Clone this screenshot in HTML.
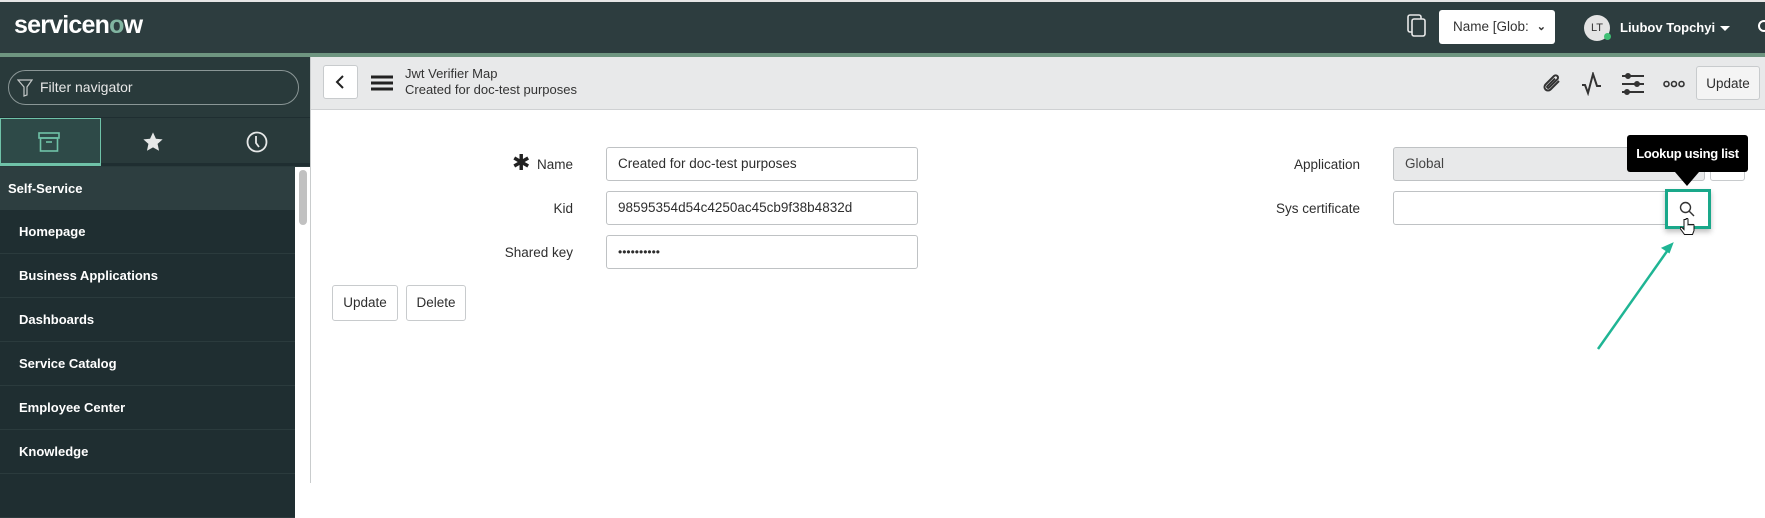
<!DOCTYPE html>
<html><head><meta charset="utf-8"><style>
*{box-sizing:border-box;margin:0;padding:0}
body{width:1765px;height:483px;overflow:hidden;font-family:"Liberation Sans",sans-serif;background:#fff;position:relative;color:#2e2e2e}
.abs{position:absolute}
#top{left:0;top:0;width:1765px;height:53px;background:#2d3d3f;border-top:2px solid #e6e6e6}
#strip{left:0;top:53px;width:1765px;height:4px;background:#6e9580}
#side{left:0;top:57px;width:310px;height:426px;background:#293a3b}
.item{position:absolute;left:0;width:295px;height:44px;background:#1f2e31;border-bottom:1px solid #2b3b3d;color:#fff;font-size:13px;font-weight:bold;padding-left:19px;line-height:44px}
#hdr{left:311px;top:57px;width:1454px;height:53px;background:#e8e9ea;border-bottom:1px solid #cfd1d3}
.lbl{position:absolute;font-size:13.5px;color:#2e2e2e;text-align:right}
.inp{position:absolute;border:1px solid #bfc2c4;border-radius:3px;background:#fff;font-size:13.5px;padding-left:11px;line-height:32px;color:#2e2e2e}
.btn{position:absolute;border:1px solid #c8cbcd;border-radius:3px;background:#fff;font-size:13.5px;text-align:center;line-height:33px}
</style></head><body>
<div id="top" class="abs"></div>
<div class="abs" style="left:14px;top:11px;color:#fff;font-size:25px;font-weight:bold;letter-spacing:-0.8px">servicen<span style="color:#81b5a1">o</span>w</div>
<svg class="abs" style="left:1406px;top:14px" width="22" height="24" viewBox="0 0 22 24" fill="none" stroke="#e8e8e8" stroke-width="1.6"><rect x="2" y="1" width="13" height="17" rx="2"/><rect x="6" y="5" width="13" height="17" rx="2" fill="#2d3d3f"/></svg>
<div class="abs" style="left:1439px;top:10px;width:116px;height:34px;background:#fff;border-radius:3px;font-size:13.5px;line-height:34px;padding-left:14px;color:#333">Name [Glob:<span style="position:absolute;right:9px;font-size:11px;font-weight:bold">&#8964;</span></div>
<div class="abs" style="left:1584px;top:15px;width:26px;height:26px;border-radius:50%;background:#e4e4e4;color:#333;font-size:11px;text-align:center;line-height:26px">LT</div>
<div class="abs" style="left:1604px;top:33px;width:7px;height:7px;border-radius:50%;background:#3fbf74"></div>
<div class="abs" style="left:1620px;top:20px;color:#fff;font-size:13px;font-weight:bold">Liubov Topchyi</div>
<div class="abs" style="left:1720px;top:26px;width:0;height:0;border-left:5px solid transparent;border-right:5px solid transparent;border-top:5px solid #fff"></div>
<div class="abs" style="left:1758px;top:20px;width:12px;height:12px;border:2px solid #fff;border-radius:50%"></div>
<div id="strip" class="abs"></div>
<div id="side" class="abs"></div>
<div class="abs" style="left:8px;top:70px;width:291px;height:35px;border:1px solid #8a9696;border-radius:18px"></div>
<svg class="abs" style="left:17px;top:78px" width="16" height="20" viewBox="0 0 16 20" fill="none" stroke="#c4c8c8" stroke-width="1.2"><path d="M1 2h14l-5 7v8l-3 1v-9z"/></svg>
<div class="abs" style="left:40px;top:79px;color:#e8e8e8;font-size:14px">Filter navigator</div>
<div class="abs" style="left:0;top:117px;width:310px;height:1px;background:#1f2e31"></div>
<div class="abs" style="left:0;top:118px;width:101px;height:48px;background:#2e4a48;border:1px solid #6fc2a8;border-bottom:3px solid #6fc2a8"></div>
<div class="abs" style="left:101px;top:163px;width:209px;height:3px;background:#1f2e31"></div>
<svg class="abs" style="left:38px;top:132px" width="22" height="20" viewBox="0 0 22 20" fill="none" stroke="#6fc2a8" stroke-width="1.6"><rect x="1" y="1" width="20" height="5"/><rect x="2.5" y="6" width="17" height="13"/><path d="M8 10h6"/></svg>
<svg class="abs" style="left:142px;top:131px" width="22" height="22" viewBox="0 0 24 24"><path d="M12 1.5l3.2 7 7.3.7-5.5 4.9 1.6 7.4L12 17.8l-6.6 3.7 1.6-7.4L1.5 9.2l7.3-.7z" fill="#e6e8e8"/></svg>
<svg class="abs" style="left:246px;top:131px" width="22" height="22" viewBox="0 0 22 22" fill="none" stroke="#e6e8e8" stroke-width="1.8"><circle cx="11" cy="11" r="9.5"/><path d="M10 5v7l3 4"/></svg>
<div class="abs" style="left:0;top:167px;width:295px;height:43px;background:#2d3e40;color:#fff;font-size:13px;font-weight:bold;line-height:43px;padding-left:8px">Self-Service</div>
<div class="item" style="top:210px">Homepage</div>
<div class="item" style="top:254px">Business Applications</div>
<div class="item" style="top:298px">Dashboards</div>
<div class="item" style="top:342px">Service Catalog</div>
<div class="item" style="top:386px">Employee Center</div>
<div class="item" style="top:430px">Knowledge</div>
<div class="item" style="top:474px"></div>
<div class="abs" style="left:295px;top:167px;width:15px;height:316px;background:#fff"></div>
<div class="abs" style="left:299px;top:170px;width:8px;height:55px;background:#c1c1c1;border-radius:4px"></div>
<div class="abs" style="left:310px;top:57px;width:1px;height:426px;background:#c9cccd"></div>
<div id="hdr" class="abs"></div>
<div class="abs" style="left:323px;top:65px;width:35px;height:34px;background:#fff;border:1px solid #c8cbcd;border-radius:3px"></div>
<svg class="abs" style="left:334px;top:74px" width="12" height="16" viewBox="0 0 12 16" fill="none" stroke="#222" stroke-width="2"><path d="M9 2L3 8l6 6"/></svg>
<svg class="abs" style="left:371px;top:75px" width="22" height="16" viewBox="0 0 22 16" stroke="#222" stroke-width="3"><path d="M0 2h22M0 8h22M0 14h22"/></svg>
<div class="abs" style="left:405px;top:66px;font-size:13px;color:#333">Jwt Verifier Map</div>
<div class="abs" style="left:405px;top:82px;font-size:13px;color:#333">Created for doc-test purposes</div>
<svg class="abs" style="left:1540px;top:72px" width="24" height="24" viewBox="0 0 24 24" fill="none" stroke="#333" stroke-width="2"><path d="M19 9l-8.5 8.5a3.5 3.5 0 01-5-5L14 4a2.3 2.3 0 013.3 3.3L9 15.6a1 1 0 01-1.5-1.5L15 6.6"/></svg>
<svg class="abs" style="left:1581px;top:72px" width="24" height="24" viewBox="0 0 24 24" fill="none" stroke="#333" stroke-width="2"><path d="M1 13h3l3 8 5-19 4 12h4"/></svg>
<svg class="abs" style="left:1622px;top:72px" width="22" height="24" viewBox="0 0 22 24" stroke="#333" stroke-width="2"><path d="M0 4h22M0 12h22M0 20h22"/><circle cx="6" cy="4" r="2" fill="#333"/><circle cx="15" cy="12" r="2" fill="#333"/><circle cx="5" cy="20" r="2" fill="#333"/></svg>
<svg class="abs" style="left:1663px;top:78px" width="22" height="12" viewBox="0 0 22 12" fill="none" stroke="#333" stroke-width="1.6"><circle cx="3.5" cy="6" r="2.5"/><circle cx="11" cy="6" r="2.5"/><circle cx="18.5" cy="6" r="2.5"/></svg>
<div class="btn" style="left:1696px;top:66px;width:64px;height:34px;background:#f4f4f4">Update</div>
<div class="abs" style="left:512px;top:152px;font-size:22px;line-height:22px;color:#222">&#10033;</div>
<div class="lbl" style="left:400px;top:157px;width:173px">Name</div>
<div class="lbl" style="left:400px;top:201px;width:173px">Kid</div>
<div class="lbl" style="left:400px;top:245px;width:173px">Shared key</div>
<div class="inp" style="left:606px;top:147px;width:312px;height:34px">Created for doc-test purposes</div>
<div class="inp" style="left:606px;top:191px;width:312px;height:34px">98595354d54c4250ac45cb9f38b4832d</div>
<div class="inp" style="left:606px;top:235px;width:312px;height:34px;font-size:12px">&#8226;&#8226;&#8226;&#8226;&#8226;&#8226;&#8226;&#8226;&#8226;&#8226;</div>
<div class="btn" style="left:332px;top:285px;width:66px;height:36px">Update</div>
<div class="btn" style="left:406px;top:285px;width:60px;height:36px">Delete</div>
<div class="lbl" style="left:1200px;top:157px;width:160px">Application</div>
<div class="lbl" style="left:1200px;top:201px;width:160px">Sys certificate</div>
<div class="inp" style="left:1393px;top:147px;width:312px;height:34px;background:#e8e9ea;color:#444">Global</div>
<div class="abs" style="left:1710px;top:147px;width:35px;height:34px;border:1px solid #c8cbcd;border-radius:3px;background:#fff"></div>
<div class="inp" style="left:1393px;top:191px;width:312px;height:34px"></div>
<div class="abs" style="left:1665px;top:189px;width:46px;height:40px;border:3px solid #1aa88a;background:#fff;box-shadow:0 3px 5px rgba(0,0,0,.25)"></div>
<svg class="abs" style="left:1679px;top:201px" width="16" height="16" viewBox="0 0 16 16" fill="none" stroke="#333" stroke-width="1.4"><circle cx="6.5" cy="6.5" r="5"/><path d="M10 10l5 5"/></svg>
<svg class="abs" style="left:1680px;top:218px" width="16" height="20" viewBox="0 0 16 20"><path d="M4 1.5v10l-2-2c-1.5-1-2.5.5-1.5 1.5l4 5.5h8l1.5-4v-5c0-1.5-2-1.5-2 0 0-1.5-2-1.5-2 0 0-1.5-2-1.5-2 0V1.5c0-1.5-2.5-1.5-2 0z" fill="#fff" stroke="#111" stroke-width="1"/></svg>
<div class="abs" style="left:1627px;top:135px;width:121px;height:37px;background:#000;border-radius:3px;color:#fff;font-size:13px;font-weight:bold;text-align:center;line-height:37px;letter-spacing:-0.3px">Lookup using list</div>
<div class="abs" style="left:1675px;top:172px;width:0;height:0;border-left:12px solid transparent;border-right:12px solid transparent;border-top:14px solid #000"></div>
<svg class="abs" style="left:1590px;top:238px" width="90" height="120" viewBox="0 0 90 120"><path d="M8 111L80 9" stroke="#1fb594" stroke-width="2.5"/><path d="M82 6l-9 4 6 4z" fill="#1fb594" stroke="#1fb594" stroke-width="2"/></svg>
</body></html>
